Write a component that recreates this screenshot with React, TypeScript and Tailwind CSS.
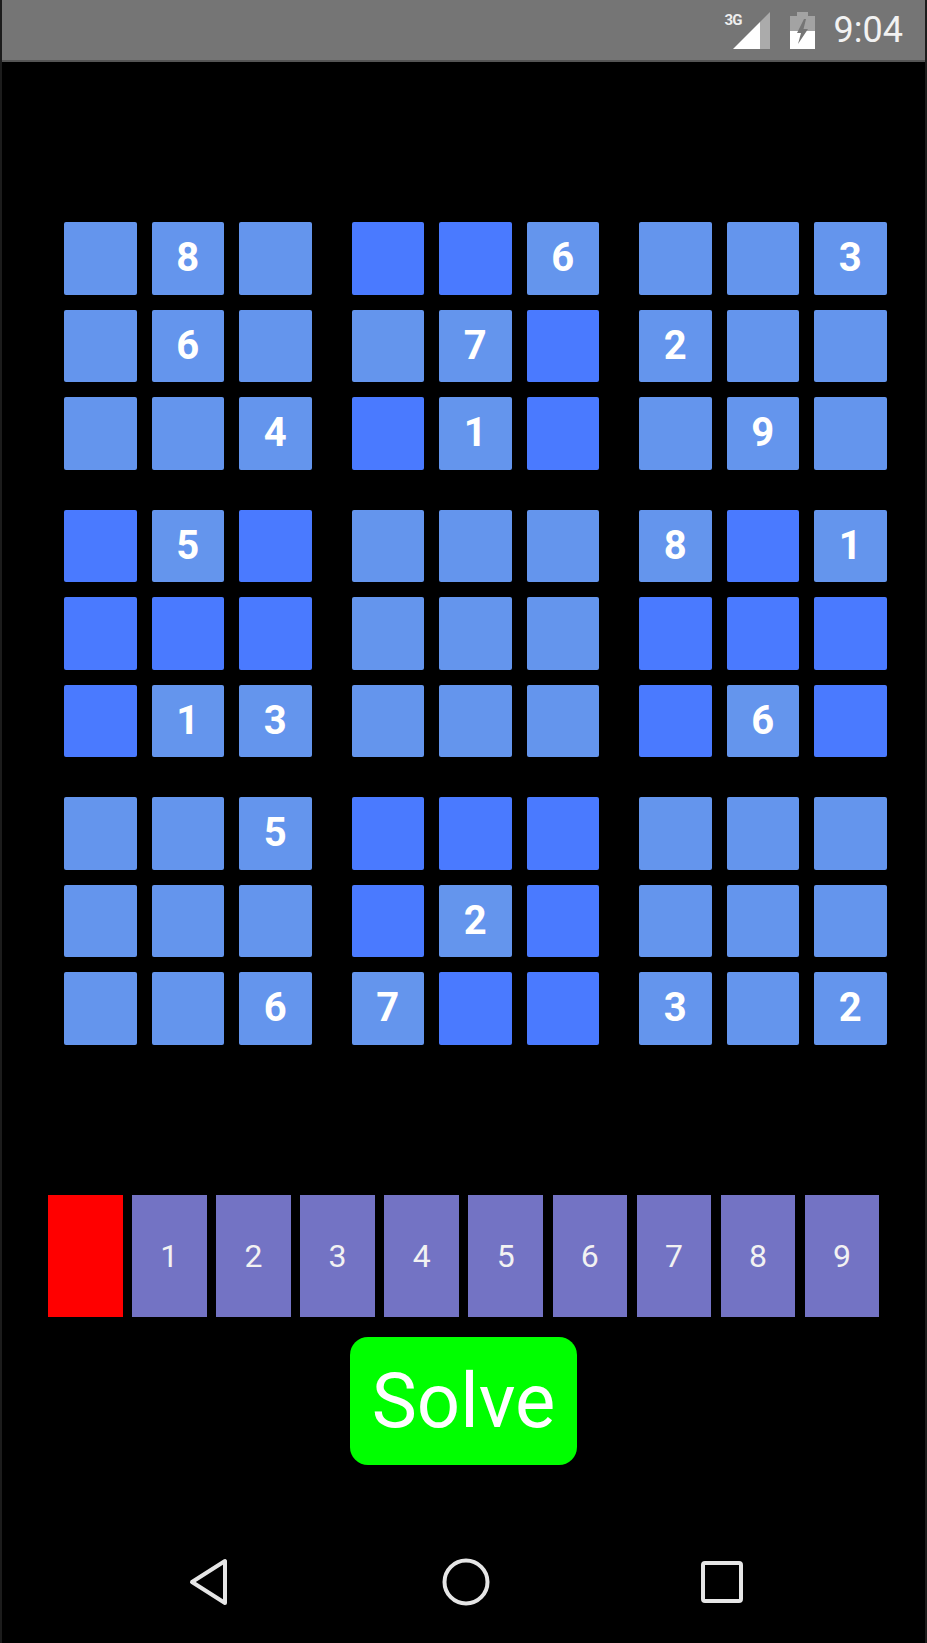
const boxes = [
  ["_8_", "_6_", "__4"],
  ["dd6", "_7d", "d1d"],
  ["__3", "2__", "_9_"],
  ["d5d", "ddd", "d13"],
  ["___", "___", "___"],
  ["8d1", "ddd", "d6d"],
  ["__5", "___", "__6"],
  ["ddd", "d2d", "7dd"],
  ["___", "___", "3_2"],
];

const palette = ["", "1", "2", "3", "4", "5", "6", "7", "8", "9"];

function Cell({ value }: { value: string }) {
  const isDark = value === "d";
  const hasDigit = value !== "d" && value !== "_";
  return (
    <div
      className={`flex h-[72.5px] w-[72.5px] items-center justify-center rounded-[2px] text-[40px] font-bold text-white ${
        isDark ? "bg-[#4a7aff]" : "bg-[#6495ed]"
      }`}
    >
      {hasDigit ? value : null}
    </div>
  );
}

function Box({ rows }: { rows: string[] }) {
  return (
    <div className="flex flex-col gap-[15px]">
      {rows.map((row, r) => (
        <div key={r} className="flex gap-[15px]">
          {row.split("").map((value, c) => (
            <Cell key={c} value={value} />
          ))}
        </div>
      ))}
    </div>
  );
}

function StatusBar() {
  return (
    <div className="flex h-[62px] shrink-0 items-center justify-end border-b-2 border-[#555555] bg-[#757575] pr-[22px]">
      <div className="relative h-[37px] w-[45px]">
        <span className="absolute left-0 top-[-1px] text-[15px] font-bold leading-[18px] tracking-[-1px] text-[#eeeeee]">
          3G
        </span>
        <svg viewBox="0 0 37 37" className="absolute right-0 top-0 h-[37px] w-[37px]">
          <path d="M37 0V37H27V10Z" fill="#ababab" />
          <path d="M0 37L27 10V37Z" fill="#ffffff" />
        </svg>
      </div>
      <svg viewBox="0 0 25 37" className="ml-[20px] h-[37px] w-[25px]">
        <path d="M7 0H18V4H25V37H0V4H7Z" fill="#a3a3a3" />
        <path d="M0 19H25V37H0Z" fill="#ffffff" />
        <path d="M14 7L7 21H11L8 32L18 17H13.5L16 7Z" fill="#757575" />
      </svg>
      <span className="ml-[19px] text-[36px] leading-none text-[#f2f2f2]">9:04</span>
    </div>
  );
}

function NavBar() {
  return (
    <div className="mt-[93px] flex items-start pl-[185px]">
      <svg viewBox="0 0 42 48" className="h-[48px] w-[42px]">
        <path d="M38 3V45L5 24Z" fill="none" stroke="#e6e6e6" strokeWidth="4" strokeLinejoin="round" />
      </svg>
      <svg viewBox="0 0 48 48" className="ml-[213px] h-[48px] w-[48px]">
        <circle cx="24" cy="24" r="21.5" fill="none" stroke="#e6e6e6" strokeWidth="4" />
      </svg>
      <svg viewBox="0 0 44 44" className="ml-[210px] mt-[2px] h-[44px] w-[44px]">
        <rect x="3" y="3" width="38" height="38" rx="2" fill="none" stroke="#e6e6e6" strokeWidth="4" />
      </svg>
    </div>
  );
}

export default function App() {
  return (
    <div
      className="flex h-[1643px] w-[927px] flex-col overflow-hidden border-x-2 border-[#1c1c1c] bg-black"
      style={{ fontFamily: "Roboto, sans-serif" }}
    >
      <StatusBar />

      <div className="ml-[62px] mt-[160px] grid w-fit grid-cols-3 gap-x-[40px] gap-y-[40px]">
        {boxes.map((rows, i) => (
          <Box key={i} rows={rows} />
        ))}
      </div>

      <div className="ml-[46px] mt-[150px] flex gap-[9.6px]">
        {palette.map((digit, i) => (
          <div
            key={i}
            className={`flex h-[122px] w-[74.5px] items-center justify-center text-[32px] text-[#f2f2f2] ${
              i === 0 ? "bg-[#ff0000]" : "bg-[#7373c4]"
            }`}
          >
            {digit}
          </div>
        ))}
      </div>

      <div className="mt-[20px] flex justify-center">
        <button className="flex h-[128px] w-[227px] items-center justify-center rounded-[18px] bg-[#00ff00] text-[76px] text-white">
          Solve
        </button>
      </div>

      <NavBar />
    </div>
  );
}
